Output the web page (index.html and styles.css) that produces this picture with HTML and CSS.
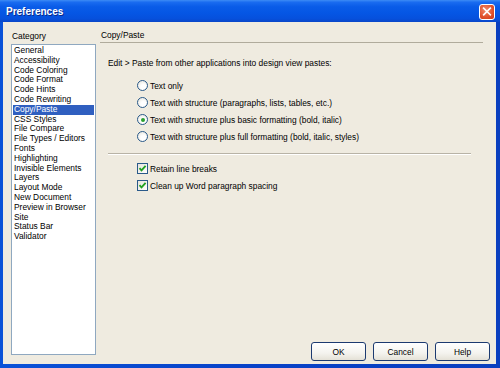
FILE: index.html
```html
<!DOCTYPE html>
<html>
<head>
<meta charset="utf-8">
<link rel="stylesheet" href="styles.css">
</head>
<body>
<div class="window">
  <div class="titlebar">
    <span class="title">Preferences</span>
    <span class="close">
      <svg width="15" height="15" viewBox="0 0 15 15"><path d="M4 4 L11 11 M11 4 L4 11" stroke="#fff" stroke-width="1.8" stroke-linecap="square"/></svg>
    </span>
  </div>
  <div class="client">
    <div class="leftcol">
      <div class="label">Category</div>
      <ul class="listbox">
        <li>General</li>
        <li>Accessibility</li>
        <li>Code Coloring</li>
        <li>Code Format</li>
        <li>Code Hints</li>
        <li>Code Rewriting</li>
        <li class="selected">Copy/Paste</li>
        <li>CSS Styles</li>
        <li>File Compare</li>
        <li>File Types / Editors</li>
        <li>Fonts</li>
        <li>Highlighting</li>
        <li>Invisible Elements</li>
        <li>Layers</li>
        <li>Layout Mode</li>
        <li>New Document</li>
        <li>Preview in Browser</li>
        <li>Site</li>
        <li>Status Bar</li>
        <li>Validator</li>
      </ul>
    </div>
    <div class="rightcol">
      <div class="header">Copy/Paste</div>
      <div class="panel">
        <div class="intro">Edit &gt; Paste from other applications into design view pastes:</div>
        <div class="options">
          <div class="opt"><span class="radio"></span>Text only</div>
          <div class="opt"><span class="radio"></span>Text with structure (paragraphs, lists, tables, etc.)</div>
          <div class="opt"><span class="radio on"></span>Text with structure plus basic formatting (bold, italic)</div>
          <div class="opt"><span class="radio"></span>Text with structure plus full formatting (bold, italic, styles)</div>
        </div>
        <div class="sep"></div>
        <div class="options checks">
          <div class="opt"><span class="check"><svg width="9" height="9" viewBox="0 0 9 9"><path d="M1.5 4.2 L3.5 6.4 L7.6 1.8" fill="none" stroke="#21a121" stroke-width="1.8"/></svg></span>Retain line breaks</div>
          <div class="opt"><span class="check"><svg width="9" height="9" viewBox="0 0 9 9"><path d="M1.5 4.2 L3.5 6.4 L7.6 1.8" fill="none" stroke="#21a121" stroke-width="1.8"/></svg></span>Clean up Word paragraph spacing</div>
        </div>
      </div>
      <div class="buttons">
        <button class="btn">OK</button>
        <button class="btn">Cancel</button>
        <button class="btn">Help</button>
      </div>
    </div>
  </div>
</div>
</body>
</html>
```
FILE: styles.css
```css
* { box-sizing: border-box; }
html, body { margin: 0; padding: 0; }
body {
  width: 500px;
  height: 368px;
  font-family: "Liberation Sans", Arial, sans-serif;
  font-size: 8.4px;
  color: #000;
  overflow: hidden;
}
.window {
  width: 500px;
  height: 368px;
  display: flex;
  flex-direction: column;
  background: linear-gradient(to right, #0a52d8, #0842c8 50%, #0a3fbf);
  padding: 0 4px 4px 3px;
}
.titlebar {
  height: 22px;
  margin: 0 -4px 0 -3px;
  padding: 0 5px 0 6px;
  display: flex;
  align-items: center;
  justify-content: space-between;
  background: linear-gradient(to bottom, #3d8cf5 0%, #1a6cf0 10%, #0a5ce8 30%, #0556e4 60%, #0650dc 85%, #0a46c8 100%);
}
.title {
  color: #fff;
  font-weight: bold;
  font-size: 10px;
  text-shadow: 1px 1px 0 #0a2a8a;
}
.close {
  width: 16px;
  height: 16px;
  border: 1px solid #fff;
  border-radius: 3px;
  background: radial-gradient(circle at 40% 35%, #f08a6a, #e0502a 60%, #c8381a);
  display: flex;
  align-items: center;
  justify-content: center;
  margin-top: 1px;
}
.close svg { display: block; }
.client {
  flex: 1;
  background: #efebe0;
  display: flex;
  padding: 8px 6px 9px 8px;
  gap: 4px;
}
.leftcol {
  width: 85px;
  display: flex;
  flex-direction: column;
}
.label {
  height: 12px;
  line-height: 12px;
  padding-left: 1px;
  margin-bottom: 2px;
}
.listbox {
  flex: 1;
  list-style: none;
  margin: 0;
  padding: 1px 1px;
  background: #fff;
  border: 1px solid #8fa8c0;
}
.listbox li {
  height: 9.8px;
  line-height: 9.8px;
  padding-left: 1px;
  white-space: nowrap;
}
.listbox li.selected {
  background: #2f5fc0;
  color: #fff;
}
.rightcol {
  flex: 1;
  display: flex;
  flex-direction: column;
}
.header {
  height: 13px;
  line-height: 11px;
  padding-left: 1px;
  margin-right: 7px;
  border-bottom: 1px solid #b0ab9c;
}
.panel {
  flex: 1;
  padding: 14px 0 0 8px;
}
.intro {
  height: 12px;
  line-height: 12px;
}
.options {
  margin-top: 8px;
  padding-left: 29px;
  display: flex;
  flex-direction: column;
}
.opt {
  height: 17px;
  display: flex;
  align-items: center;
  white-space: nowrap;
}
.radio {
  width: 11px;
  height: 11px;
  border-radius: 50%;
  border: 1px solid #2a5a8a;
  background: radial-gradient(circle at 60% 65%, #fff 30%, #e4e2d8 100%);
  margin-right: 2px;
  position: relative;
  flex: none;
}
.radio.on::after {
  content: "";
  position: absolute;
  left: 2.5px;
  top: 2.5px;
  width: 4px;
  height: 4px;
  border-radius: 50%;
  background: #2aa030;
}
.sep {
  height: 0;
  margin: 8px 19px 0 0;
  border-top: 1px solid #b8b3a6;
  border-bottom: 1px solid #fff;
}
.checks { margin-top: 5px; }
.check {
  width: 11px;
  height: 11px;
  border: 1px solid #2a5a8a;
  background: linear-gradient(135deg, #e6e4dc, #fff);
  margin-right: 2px;
  display: flex;
  align-items: center;
  justify-content: center;
  flex: none;
}
.check svg { display: block; }
.buttons {
  display: flex;
  justify-content: flex-end;
  gap: 7px;
  margin-bottom: -6px;
}
.btn {
  width: 55px;
  height: 19px;
  font-family: "Liberation Sans", Arial, sans-serif;
  font-size: 8.4px;
  color: #000;
  background: linear-gradient(to bottom, #fff 0%, #f4f3ee 60%, #e4e1d6 100%);
  border: 1px solid #1c3a70;
  border-radius: 3px;
  padding: 0;
}
```
